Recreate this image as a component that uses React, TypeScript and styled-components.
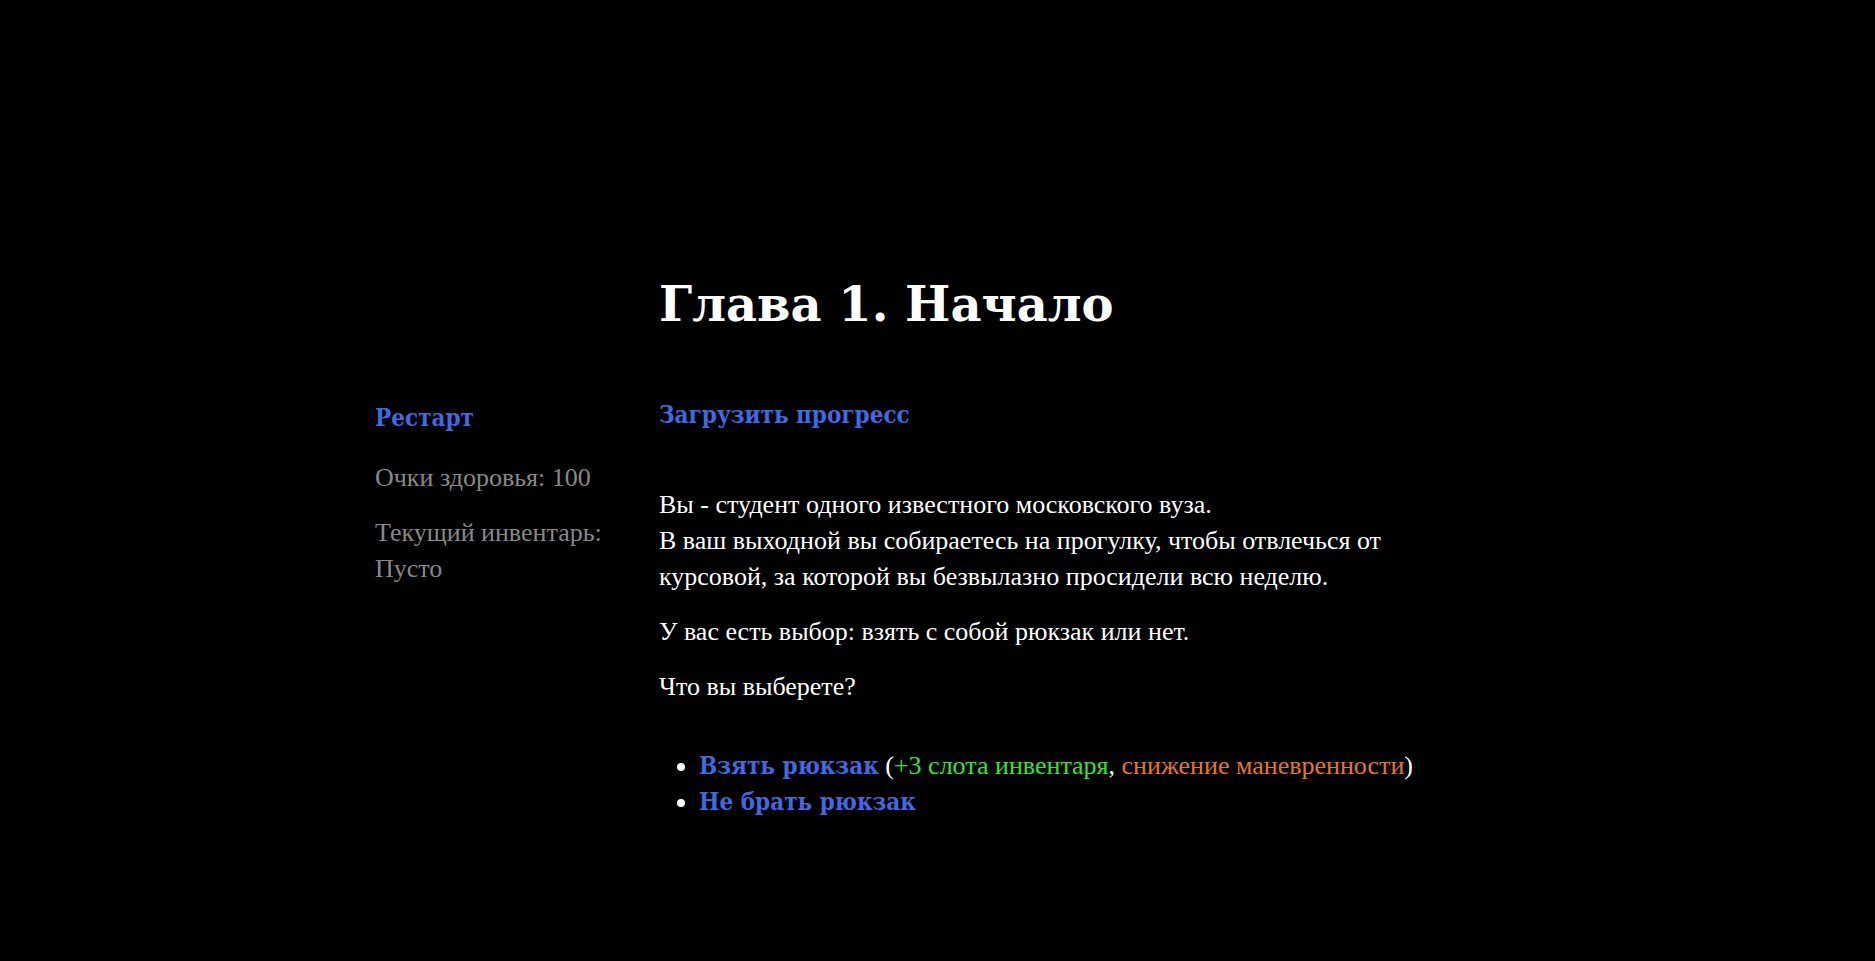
import React from 'react';
import styled, { createGlobalStyle } from 'styled-components';

const GlobalStyle = createGlobalStyle`
  *, *::before, *::after { box-sizing: border-box; }
  body {
    margin: 0;
    background: #000;
    color: #fff;
    font-family: 'Liberation Serif', serif;
    font-size: 26px;
    line-height: 36px;
  }
`;

const Story = styled.div`
  display: grid;
  grid-template-columns: 236px minmax(0, 800px);
  column-gap: 48px;
  min-height: 100vh;
  padding: 264px 20% 60px;
`;

const Sidebar = styled.aside`
  padding-top: 136px;
  color: #888;
`;

const Passage = styled.main`
  min-width: 0;
`;

const Title = styled.h1`
  margin: 0 0 53px;
  font-family: 'DejaVu Serif', serif;
  font-size: 48px;
  line-height: 80px;
  font-weight: 700;
`;

const Paragraph = styled.p<{ $after?: number }>`
  margin: 0 0 ${({ $after = 19 }) => $after}px;
`;

const StoryLink = styled.a`
  color: #4169e1;
  font-family: 'DejaVu Serif Condensed', 'DejaVu Serif', serif;
  font-size: 24px;
  line-height: 24px;
  font-weight: 700;
  text-decoration: none;

  &:hover { color: #00bfff; }
`;

const Choices = styled.ul`
  margin: 0;
  padding-left: 40px;
`;

const Effect = styled.span<{ $good?: boolean }>`
  color: ${({ $good }) => ($good ? '#32e632' : '#e67821')};
`;

export default function App() {
  return (
    <>
      <GlobalStyle />
      <Story>
        <Sidebar>
          <Paragraph $after={24}>
            <StoryLink href="#restart">Рестарт</StoryLink>
          </Paragraph>
          <Paragraph>Очки здоровья: 100</Paragraph>
          <Paragraph>Текущий инвентарь: Пусто</Paragraph>
        </Sidebar>
        <Passage>
          <Title>Глава 1. Начало</Title>
          <Paragraph $after={54}>
            <StoryLink href="#load">Загрузить прогресс</StoryLink>
          </Paragraph>
          <Paragraph>
            Вы - студент одного известного московского вуза.
            <br />В ваш выходной вы собираетесь на прогулку, чтобы отвлечься от
            курсовой, за которой вы безвылазно просидели всю неделю.
          </Paragraph>
          <Paragraph>У вас есть выбор: взять с собой рюкзак или нет.</Paragraph>
          <Paragraph $after={43}>Что вы выберете?</Paragraph>
          <Choices>
            <li>
              <StoryLink href="#take">Взять рюкзак</StoryLink> (
              <Effect $good>+3 слота инвентаря</Effect>,{' '}
              <Effect>снижение маневренности</Effect>)
            </li>
            <li>
              <StoryLink href="#leave">Не брать рюкзак</StoryLink>
            </li>
          </Choices>
        </Passage>
      </Story>
    </>
  );
}
